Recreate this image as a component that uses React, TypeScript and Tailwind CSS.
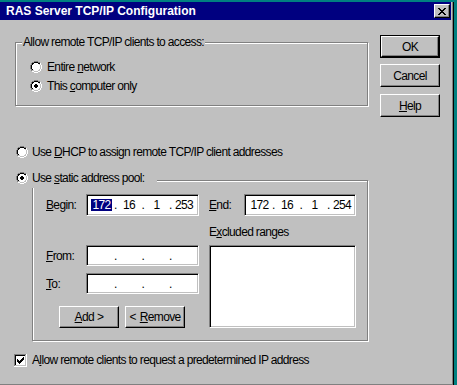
import React from "react";

const PAL: Record<string, string> = {
  D: "#808080",
  K: "#000000",
  W: "#ffffff",
  L: "#c0c0c0",
  H: "#ffffff",
};

function Pixels({ rows, className }: { rows: string[]; className?: string }) {
  const w = rows[0].length;
  const h = rows.length;
  const rects: React.ReactNode[] = [];
  rows.forEach((r, y) => {
    for (let x = 0; x < r.length; x++) {
      const c = r[x];
      if (c !== ".") rects.push(<rect key={x + "-" + y} x={x} y={y} width={1} height={1} fill={PAL[c]} />);
    }
  });
  return (
    <svg width={w} height={h} viewBox={`0 0 ${w} ${h}`} shapeRendering="crispEdges" className={className}>
      {rects}
    </svg>
  );
}

const RADIO = [
  "....DDDD....",
  "..DDKKKKDD..",
  ".DKKWWWWKKH.",
  ".DKWWWWWWLH.",
  "DKWWWWWWWWLH",
  "DKWWWWWWWWLH",
  "DKWWWWWWWWLH",
  "DKWWWWWWWWLH",
  ".DKWWWWWWLH.",
  ".DLLWWWWLLH.",
  "..HHLLLLHH..",
  "....HHHH....",
];
const RADIO_ON = [
  "....DDDD....",
  "..DDKKKKDD..",
  ".DKKWWWWKKH.",
  ".DKWWWWWWLH.",
  "DKWWWKKWWWLH",
  "DKWWKKKKWWLH",
  "DKWWKKKKWWLH",
  "DKWWWKKWWWLH",
  ".DKWWWWWWLH.",
  ".DLLWWWWLLH.",
  "..HHLLLLHH..",
  "....HHHH....",
];
const CHECK = [
  "DDDDDDDDDDDDH",
  "DKKKKKKKKKKLH",
  "DKWWWWWWWWWLH",
  "DKWWWWWWWKWLH",
  "DKWWWWWWKKWLH",
  "DKWKWWWKKKWLH",
  "DKWKKWKKKWWLH",
  "DKWKKKKKWWWLH",
  "DKWWKKKWWWWLH",
  "DKWWWKWWWWWLH",
  "DKWWWWWWWWWLH",
  "DLLLLLLLLLLLH",
  "HHHHHHHHHHHHH",
];
const XGLYPH = [
  "KK....KK",
  ".KK..KK.",
  "..KKKK..",
  "...KK...",
  "..KKKK..",
  ".KK..KK.",
  "KK....KK",
];

const raised =
  "border border-t-white border-l-white border-r-black border-b-black shadow-[inset_-1px_-1px_0_#808080] bg-[#c0c0c0]";
const sunken =
  "border border-[#808080] border-r-white border-b-white shadow-[inset_1px_1px_0_#000,inset_-1px_-1px_0_#c0c0c0] bg-white";
const etched = "border border-[#808080] shadow-[inset_1px_1px_0_#fff,1px_1px_0_#fff]";

function U({ children }: { children: React.ReactNode }) {
  return <span className="underline decoration-1 underline-offset-[1px]">{children}</span>;
}

function Btn({ children, w = "w-[60px]", h = "h-[23px]" }: { children: React.ReactNode; w?: string; h?: string }) {
  return <div className={`${raised} ${w} ${h} flex items-center justify-center leading-[14px]`}>{children}</div>;
}

function Ip({ vals, sel }: { vals: string[]; sel?: boolean }) {
  return (
    <div className="flex items-center h-full pl-[2px] leading-[14px]">
      {vals.map((v, i) => (
        <React.Fragment key={i}>
          <span className="w-[25px] flex justify-center">
            {i === 0 && sel ? (
              <span className="bg-[#000080] text-white leading-[12px] px-[1px]">{v}</span>
            ) : (
              <span>{v}</span>
            )}
          </span>
          {i < 3 && <span className="w-[2.5px] flex justify-center">.</span>}
        </React.Fragment>
      ))}
    </div>
  );
}

export default function App() {
  return (
    <div className="w-[457px] h-[385px] bg-[#008080] overflow-hidden font-['Liberation_Sans',Arial,sans-serif] text-[12px] text-black">
      <div className="w-[454px] h-[384px] border-r border-b border-black">
        <div className="w-full h-full border-r border-b border-[#808080] bg-[#c0c0c0] tracking-[-0.65px]">
          {/* Title bar */}
          <div className="mt-[2px] mr-[1px] h-[18px] bg-[#000080] flex items-center justify-between pl-[6px] pr-[1px]">
            <span className="text-white font-bold text-[12px] tracking-normal leading-[14px]">
              RAS Server TCP/IP Configuration
            </span>
            <div className={`${raised} w-[16px] h-[14px] flex items-center justify-center`}>
              <Pixels rows={XGLYPH} />
            </div>
          </div>

          {/* Top row */}
          <div className="flex items-start">
            <div className={`relative ml-[15px] mt-[22px] w-[353px] h-[64px] ${etched}`}>
              <span className="absolute left-[6px] top-[-8px] px-[1px] bg-[#c0c0c0] leading-[14px]">
                Allow remote TCP/IP clients to access:
              </span>
              <div className="pt-[14px] pl-[14px]">
                <div className="h-[19px] flex items-center gap-[5px]">
                  <Pixels rows={RADIO} />
                  <span className="leading-[14px]">
                    Entire <U>n</U>etwork
                  </span>
                </div>
                <div className="h-[19px] flex items-center gap-[5px]">
                  <Pixels rows={RADIO_ON} />
                  <span className="leading-[14px]">
                    This <U>c</U>omputer only
                  </span>
                </div>
              </div>
            </div>
            <div className="ml-[12px] mt-[15px] flex flex-col">
              <div className="border border-black w-[60px] h-[23px]">
                <Btn w="w-[58px]" h="h-[21px]">OK</Btn>
              </div>
              <div className="mt-[6px]">
                <Btn>Cancel</Btn>
              </div>
              <div className="mt-[7px]">
                <Btn>
                  <U>H</U>elp
                </Btn>
              </div>
            </div>
          </div>

          {/* DHCP */}
          <div className="mt-[25px] h-[20px] pl-[16px] flex items-center gap-[4px]">
            <Pixels rows={RADIO} />
            <span className="leading-[14px]">
              Use <U>D</U>HCP to assign remote TCP/IP client addresses
            </span>
          </div>

          {/* Static group */}
          <div className={`relative ml-[32px] mt-[18px] w-[336px] h-[161px] ${etched}`}>
            <div className="absolute left-[-17px] top-[-13px] h-[20px] w-[141px] bg-[#c0c0c0] flex items-center gap-[4px]">
              <Pixels rows={RADIO_ON} />
              <span className="leading-[14px]">
                Use <U>s</U>tatic address pool:
              </span>
            </div>
            <div className="pl-[13px]">
              <div className="mt-[13px] flex items-center">
                <span className="w-[40px] leading-[14px]">
                  <U>B</U>egin:
                </span>
                <div className={`${sunken} w-[113px] h-[22px]`}>
                  <Ip vals={["172", "16", "1", "253"]} sel />
                </div>
                <span className="ml-[10px] w-[35px] leading-[14px]">
                  <U>E</U>nd:
                </span>
                <div className={`${sunken} w-[112px] h-[22px]`}>
                  <Ip vals={["172", "16", "1", "254"]} />
                </div>
              </div>
              <div className="flex">
                <div className="w-[163px]">
                  <div className="mt-[29px] flex items-center">
                    <span className="w-[40px] leading-[14px]">
                      <U>F</U>rom:
                    </span>
                    <div className={`${sunken} w-[113px] h-[21px]`}>
                      <Ip vals={["", "", "", ""]} />
                    </div>
                  </div>
                  <div className="mt-[7px] flex items-center">
                    <span className="w-[40px] leading-[14px]">
                      <U>T</U>o:
                    </span>
                    <div className={`${sunken} w-[113px] h-[21px]`}>
                      <Ip vals={["", "", "", ""]} />
                    </div>
                  </div>
                  <div className="mt-[12px] pl-[13px] flex gap-[6px]">
                    <Btn h="h-[22px]">
                      <span>
                        <U>A</U>dd
                      </span>
                      <span className="ml-[3px]">&gt;</span>
                    </Btn>
                    <Btn h="h-[22px]">
                      <span>&lt;</span>
                      <span className="ml-[4px]">
                        <U>R</U>emove
                      </span>
                    </Btn>
                  </div>
                </div>
                <div className="w-[147px]">
                  <div className="mt-[9px] h-[14px] leading-[14px]">
                    E<U>x</U>cluded ranges
                  </div>
                  <div className={`${sunken} mt-[6px] h-[83px]`} />
                </div>
              </div>
            </div>
          </div>

          {/* Checkbox */}
          <div className="mt-[12px] ml-[14px] h-[14px] flex items-center gap-[5px]">
            <Pixels rows={CHECK} />
            <span className="leading-[14px]">
              A<U>l</U>low remote clients to request a predetermined IP address
            </span>
          </div>
        </div>
      </div>
    </div>
  );
}
